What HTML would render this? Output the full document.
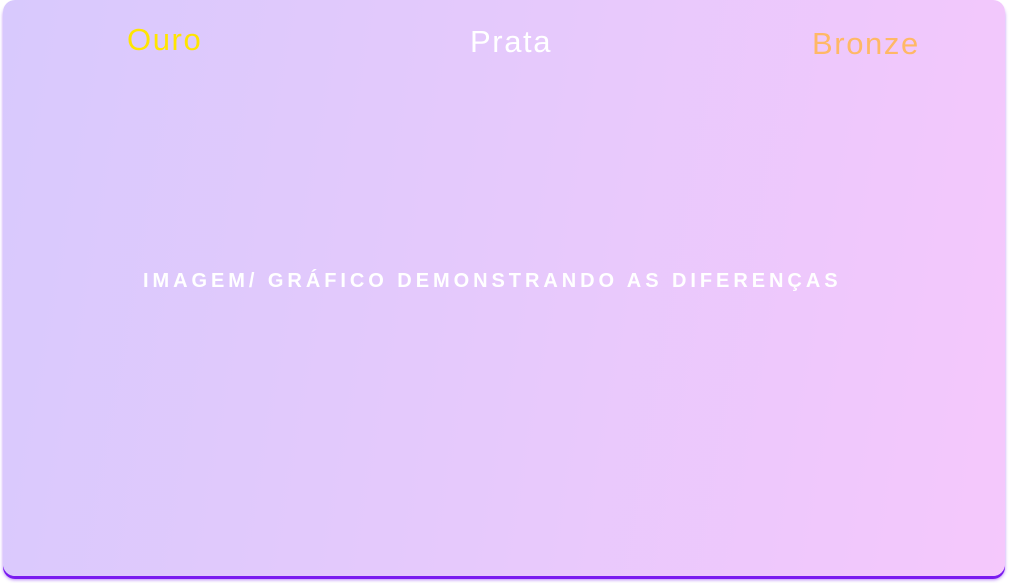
<!DOCTYPE html>
<html><head><meta charset="utf-8"><style>
html,body{margin:0;padding:0;width:1009px;height:583px;background:#fff;overflow:hidden;font-family:"Liberation Sans",sans-serif}
.card{position:absolute;left:3px;top:0;width:1002px;height:576px;border-radius:12px;
background:linear-gradient(100deg,#d8c9fd 0%,#e6c9fc 50%,#f5c8fc 100%);
box-shadow:0 3px 0 #7a1bf0, 0 4px 3px rgba(122,27,240,.5);}
.t{position:absolute;font-size:31px;line-height:1;white-space:nowrap;letter-spacing:1.6px}
.mid{position:absolute;left:143px;top:270px;width:720px;font-size:20px;font-weight:bold;color:#fff;letter-spacing:3.95px;white-space:nowrap;text-transform:uppercase}
</style></head><body>
<div class="card"></div>
<div class="t" style="left:127px;top:24px;color:#ffe500">Ouro</div>
<div class="t" style="left:470px;top:26px;color:#fff">Prata</div>
<div class="t" style="left:812px;top:28px;color:#ffb866">Bronze</div>
<div class="mid">Imagem/ gráfico demonstrando as diferenças</div>
</body></html>
